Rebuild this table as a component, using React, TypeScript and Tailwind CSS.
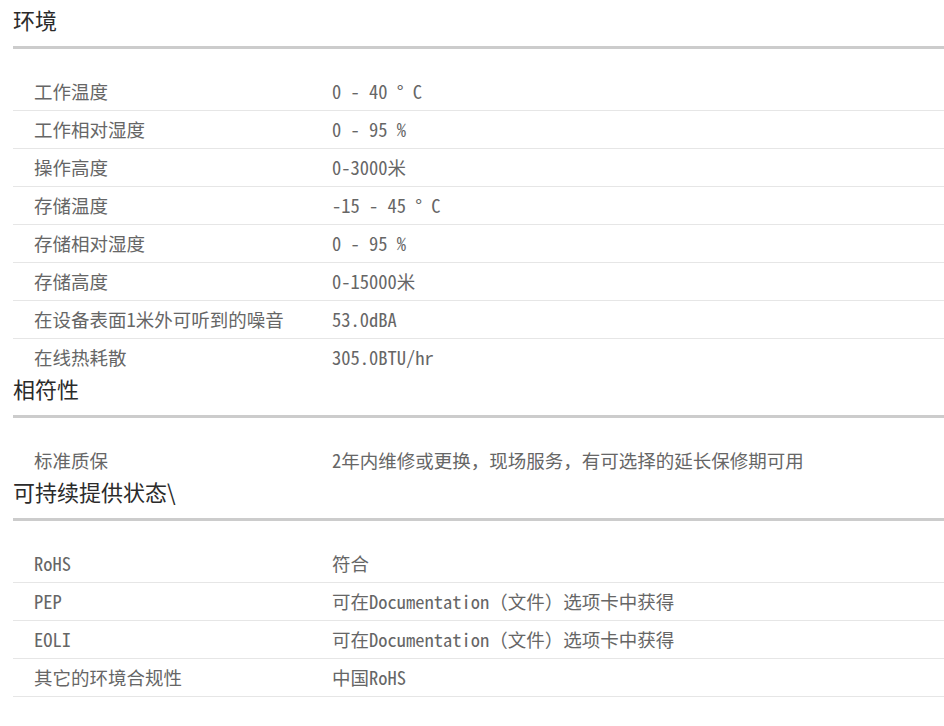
import React from "react";

type Row = [string, string];

const sections: { title: string; rows: Row[]; lastBorder: boolean }[] = [
  {
    title: "环境",
    lastBorder: false,
    rows: [
      ["工作温度", "0 - 40 ° C"],
      ["工作相对湿度", "0 - 95 %"],
      ["操作高度", "0-3000米"],
      ["存储温度", "-15 - 45 ° C"],
      ["存储相对湿度", "0 - 95 %"],
      ["存储高度", "0-15000米"],
      ["在设备表面1米外可听到的噪音", "53.0dBA"],
      ["在线热耗散", "305.0BTU/hr"],
    ],
  },
  {
    title: "相符性",
    lastBorder: false,
    rows: [["标准质保", "2年内维修或更换，现场服务，有可选择的延长保修期可用"]],
  },
  {
    title: "可持续提供状态\\",
    lastBorder: true,
    rows: [
      ["RoHS", "符合"],
      ["PEP", "可在Documentation（文件）选项卡中获得"],
      ["EOLI", "可在Documentation（文件）选项卡中获得"],
      ["其它的环境合规性", "中国RoHS"],
    ],
  },
];

export default function App() {
  return (
    <div className="min-h-[726px] w-[944px] overflow-hidden bg-white pl-[13px] pt-[8px]">
      {sections.map((s) => (
        <section key={s.title}>
          <h2 className="h-[41px] border-b-[3px] border-[#cccccc] pt-0 text-[22px] leading-[22px] text-[#2b2b2b] [font-family:'Noto_Sans_CJK_SC',sans-serif]">
            {s.title}
          </h2>
          <div className="pt-[24px]">
            {s.rows.map((r, i) => {
              const isLast = i === s.rows.length - 1;
              return (
                <div
                  key={r[0]}
                  className={
                    "flex h-[38px] items-center pb-[2px] text-[18.5px] leading-[20px] text-[#666666] [font-family:'Noto_Sans_Mono_CJK_SC','Liberation_Mono','Noto_Sans_CJK_SC',monospace] " +
                    (isLast && !s.lastBorder ? "" : "border-b border-[#e6e6e6]")
                  }
                >
                  <div className="w-[319px] shrink-0 pl-[21px] whitespace-nowrap">{r[0]}</div>
                  <div className="whitespace-nowrap">{r[1]}</div>
                </div>
              );
            })}
          </div>
        </section>
      ))}
    </div>
  );
}
